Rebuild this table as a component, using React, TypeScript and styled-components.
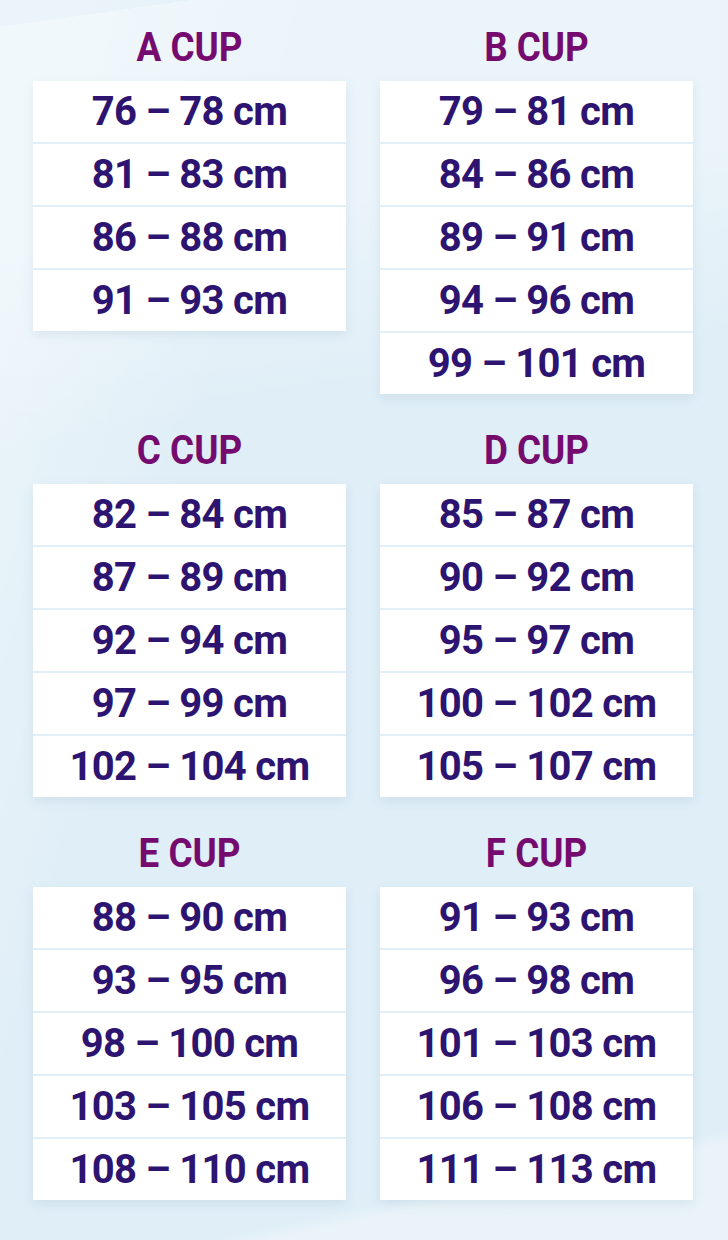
import styled, { createGlobalStyle } from "styled-components";

const GlobalStyle = createGlobalStyle`
    html, body {
        margin: 0;
        padding: 0;
    }
    body {
        width: 728px;
        font-family: Roboto, "Liberation Sans", sans-serif;
    }
`;

interface CupSize {
    cup: string;
    ranges: string[];
}

const CUPS: CupSize[] = [
    { cup: "A CUP", ranges: ["76 – 78 cm", "81 – 83 cm", "86 – 88 cm", "91 – 93 cm"] },
    { cup: "B CUP", ranges: ["79 – 81 cm", "84 – 86 cm", "89 – 91 cm", "94 – 96 cm", "99 – 101 cm"] },
    { cup: "C CUP", ranges: ["82 – 84 cm", "87 – 89 cm", "92 – 94 cm", "97 – 99 cm", "102 – 104 cm"] },
    { cup: "D CUP", ranges: ["85 – 87 cm", "90 – 92 cm", "95 – 97 cm", "100 – 102 cm", "105 – 107 cm"] },
    { cup: "E CUP", ranges: ["88 – 90 cm", "93 – 95 cm", "98 – 100 cm", "103 – 105 cm", "108 – 110 cm"] },
    { cup: "F CUP", ranges: ["91 – 93 cm", "96 – 98 cm", "101 – 103 cm", "106 – 108 cm", "111 – 113 cm"] },
];


export default function App() {
    // render
    return (
        <Page>
            <GlobalStyle />
            <Grid>
                {CUPS.map((item) => (
                    <Column key={item.cup}>
                        <CupTitle>{item.cup}</CupTitle>
                        <SizeTable>
                            {item.ranges.map((range) => (
                                <SizeRow key={range}>{range}</SizeRow>
                            ))}
                        </SizeTable>
                    </Column>
                ))}
            </Grid>
        </Page>
    );
}


const Page = styled.div`
    width: 728px;
    height: 1240px;
    box-sizing: border-box;
    padding: 28px 35px 0 33px;
    background:
        linear-gradient(172deg, transparent 0 2%, rgba(255, 255, 255, 0.35) 2% 18%, transparent 34%),
        linear-gradient(105deg, rgba(255, 255, 255, 0.35) 0 8%, transparent 30%),
        linear-gradient(168deg, transparent 0 92%, rgba(255, 255, 255, 0.3) 93%),
        #dfeef7;
`;

const Grid = styled.div`
    display: grid;
    grid-template-columns: 313px 313px;
    column-gap: 34px;
    row-gap: 37px;
    align-items: start;
`;

const Column = styled.div`
    display: flex;
    flex-direction: column;
`;

const CupTitle = styled.h2`
    margin: 0 0 13px;
    height: 40px;
    line-height: 40px;
    text-align: center;
    font-size: 40px;
    font-weight: 700;
    color: #760b6f;
    transform: scaleX(0.92);
`;

const SizeTable = styled.div`
    display: flex;
    flex-direction: column;
    gap: 2px;
    background-color: #e1f0f8;
    box-shadow: 0 4px 10px rgba(90, 130, 160, 0.12);
`;

const SizeRow = styled.div`
    height: 61px;
    display: flex;
    justify-content: center;
    align-items: center;
    background-color: #ffffff;
    font-size: 40px;
    font-weight: 700;
    letter-spacing: -0.7px;
    color: #2d1470;
    white-space: nowrap;
`;
